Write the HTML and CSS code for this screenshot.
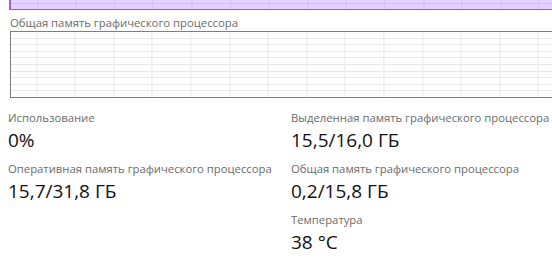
FILE: index.html
```html
<!DOCTYPE html>
<html lang="ru">
<head>
    <meta charset="UTF-8">
    <meta name="viewport" content="width=device-width, initial-scale=1.0">
    <title>Графический процессор</title>
    <link rel="stylesheet" href="styles.css">
</head>
<body>

<div class="graph graph-copy"></div>

<div class="graph-title">Общая память графического процессора</div>
<div class="graph graph-shared"></div>

<div class="stats">
    <div class="stat-col">
        <div class="stat">
            <div class="stat-label">Использование</div>
            <div class="stat-value">0%</div>
        </div>
        <div class="stat">
            <div class="stat-label">Оперативная память графического процессора</div>
            <div class="stat-value">15,7/31,8 ГБ</div>
        </div>
    </div>
    <div class="stat-col">
        <div class="stat">
            <div class="stat-label">Выделенная память графического процессора</div>
            <div class="stat-value">15,5/16,0 ГБ</div>
        </div>
        <div class="stat">
            <div class="stat-label">Общая память графического процессора</div>
            <div class="stat-value">0,2/15,8 ГБ</div>
        </div>
        <div class="stat">
            <div class="stat-label">Температура</div>
            <div class="stat-value">38 °C</div>
        </div>
    </div>
</div>

</body>
</html>
```

FILE: styles.css
```css
body {
    font-family: "Open Sans", "Noto Sans", sans-serif;
    background-color: #fff;
    color: #000;
    margin: 0;
    padding: 0;
    overflow: hidden;
    width: 552px;
    height: 259px;
}
.graph {
    margin-left: 10px;
    width: 560px;
    border: 1px solid #7d7d7d;
    border-right: none;
    background-color: #fff;
    background-image:
        repeating-linear-gradient(to right, transparent 0 37.6px, #e8e8e8 37.6px 38.6px),
        repeating-linear-gradient(to bottom, transparent 0 5.6px, #e8e8e8 5.6px 6.6px);
    background-position: -12.6px 0, 0 0;
}
/* bottom edge of the graph above, scrolled mostly out of view */
.graph-copy {
    height: 9px;
    border-top: none;
    border-left: 2px solid #a15ce6;
    margin-left: 9px;
    background-color: #e3d2ff;
    background-image:
        repeating-linear-gradient(to right, transparent 0 37.6px, #d3bdf0 37.6px 38.6px),
        linear-gradient(to bottom, transparent 0 3px, #d3bdf0 3px 4px, transparent 4px);
    background-position: -11.6px 0, 0 0;
}
.graph-title {
    margin: 5px 0 0 10px;
    font-size: 11.3px;
    line-height: 16px;
    color: #6b6b6b;
    white-space: nowrap;
}
.graph-shared {
    height: 65px;
}
.stats {
    display: grid;
    grid-template-columns: 283px 1fr;
    padding: 12px 0 0 8px;
}
.stat {
    margin-bottom: 6px;
}
.stat-label {
    font-size: 11.3px;
    line-height: 16px;
    color: #6b6b6b;
    white-space: nowrap;
}
.stat-value {
    font-size: 19px;
    line-height: 29px;
    color: #111;
    white-space: nowrap;
}
```
